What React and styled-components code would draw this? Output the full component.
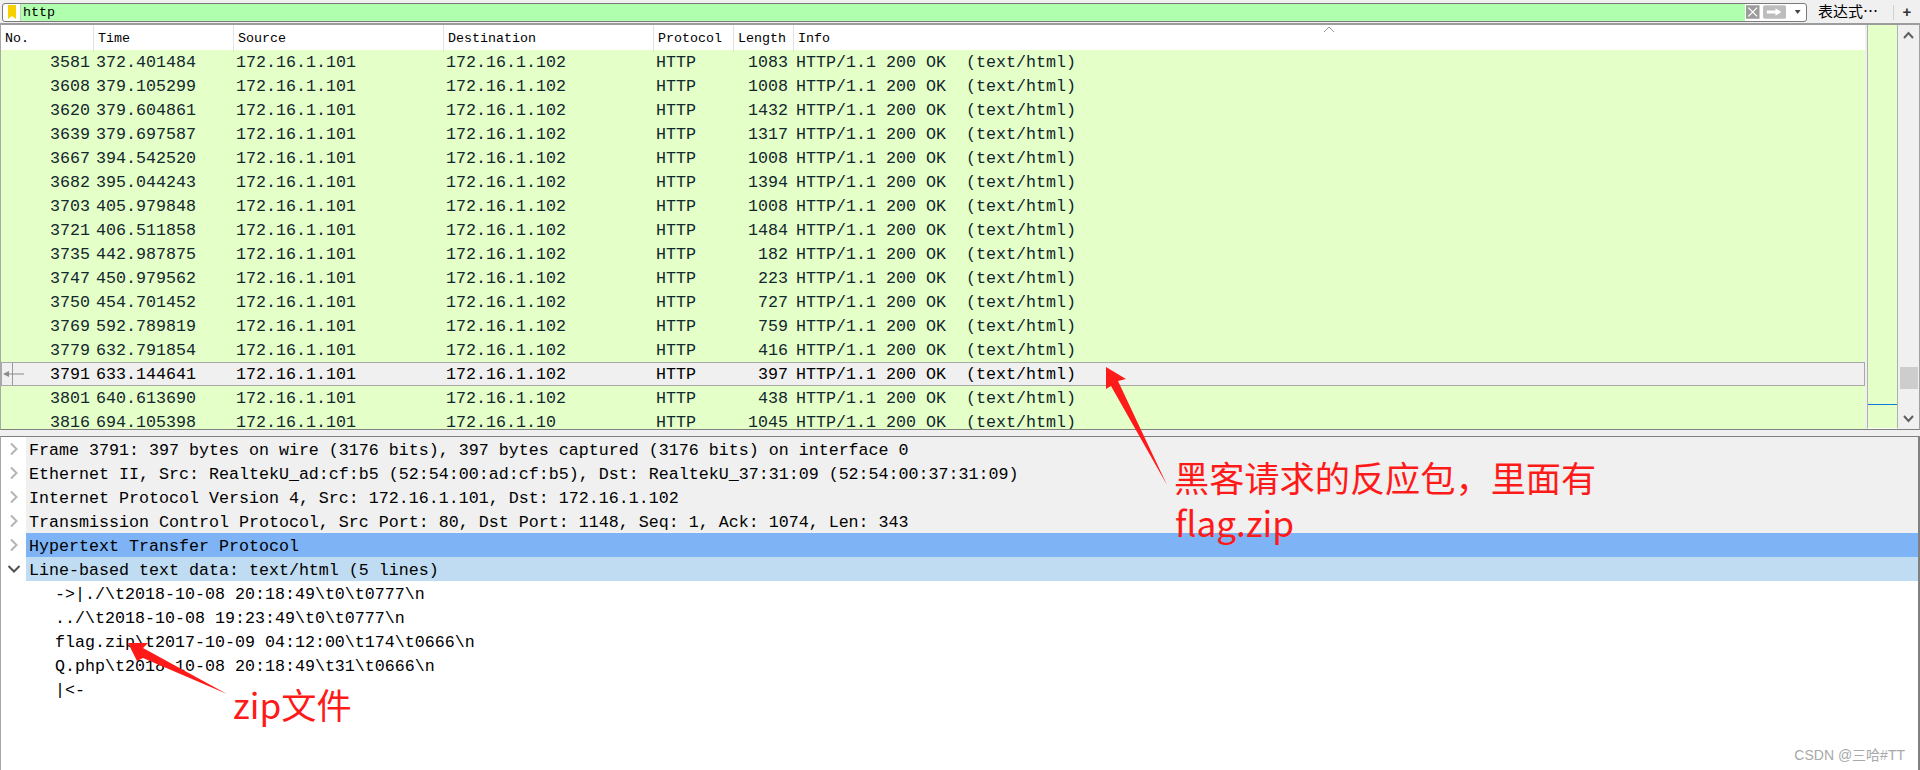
import React from "react";
import styled, { createGlobalStyle } from "styled-components";

const MONO = `"Liberation Mono", "DejaVu Sans Mono", monospace`;
const COLS = "92px 140px 210px 210px 80px 60px 1fr";

const rows = [
  [3581, "372.401484", "172.16.1.102", 1083],
  [3608, "379.105299", "172.16.1.102", 1008],
  [3620, "379.604861", "172.16.1.102", 1432],
  [3639, "379.697587", "172.16.1.102", 1317],
  [3667, "394.542520", "172.16.1.102", 1008],
  [3682, "395.044243", "172.16.1.102", 1394],
  [3703, "405.979848", "172.16.1.102", 1008],
  [3721, "406.511858", "172.16.1.102", 1484],
  [3735, "442.987875", "172.16.1.102", 182],
  [3747, "450.979562", "172.16.1.102", 223],
  [3750, "454.701452", "172.16.1.102", 727],
  [3769, "592.789819", "172.16.1.102", 759],
  [3779, "632.791854", "172.16.1.102", 416],
  [3791, "633.144641", "172.16.1.102", 397],
  [3801, "640.613690", "172.16.1.102", 438],
  [3816, "694.105398", "172.16.1.10", 1045],
];

const tree = [
  { text: "Frame 3791: 397 bytes on wire (3176 bits), 397 bytes captured (3176 bits) on interface 0" },
  { text: "Ethernet II, Src: RealtekU_ad:cf:b5 (52:54:00:ad:cf:b5), Dst: RealtekU_37:31:09 (52:54:00:37:31:09)" },
  { text: "Internet Protocol Version 4, Src: 172.16.1.101, Dst: 172.16.1.102" },
  { text: "Transmission Control Protocol, Src Port: 80, Dst Port: 1148, Seq: 1, Ack: 1074, Len: 343" },
  { text: "Hypertext Transfer Protocol", state: "selected" },
  { text: "Line-based text data: text/html (5 lines)", state: "open" },
];

const lines = [
  "->|./\\t2018-10-08 20:18:49\\t0\\t0777\\n",
  "../\\t2018-10-08 19:23:49\\t0\\t0777\\n",
  "flag.zip\\t2017-10-09 04:12:00\\t174\\t0666\\n",
  "Q.php\\t2018-10-08 20:18:49\\t31\\t0666\\n",
  "|<-",
];

const GlobalStyle = createGlobalStyle`
  html, body { margin: 0; padding: 0; background: #fff; }
  * { box-sizing: border-box; }
`;

const Page = styled.div`
  position: relative;
  width: 1920px;
  height: 770px;
  overflow: hidden;
  background: #f0f0f0;
  font-family: ${MONO};
`;

const Toolbar = styled.div`
  display: flex;
  align-items: center;
  height: 23px;
  padding: 2px 0 1px 2px;
`;

const FilterBox = styled.div`
  display: flex;
  align-items: stretch;
  width: 1805px;
  height: 19px;
  border: 1px solid #7a7a7a;
  border-radius: 3px;
  overflow: hidden;
  background: #fff;
`;

const BookmarkCell = styled.div`
  display: flex;
  align-items: center;
  justify-content: center;
  width: 18px;
  flex: none;
  border-right: 1px solid #c8c8c8;
`;

const FilterInput = styled.div`
  flex: 1;
  padding-left: 2px;
  background: #afffaf;
  color: #000;
  font-size: 13.33px;
  line-height: 17px;
`;

const FilterButtons = styled.div`
  display: flex;
  align-items: center;
  gap: 3px;
  flex: none;
  width: 61px;
  padding-left: 1px;
`;

const ExpressionLabel = styled.div`
  width: 75px;
  margin-left: 11px;
  padding-bottom: 3px;
  color: #000;
  font-family: "Noto Sans CJK SC", sans-serif;
  font-size: 15px;
  line-height: 20px;
  white-space: nowrap;
`;

const ToolbarDivider = styled.div`
  width: 1px;
  height: 15px;
  background: #d0d0d0;
`;

const PlusButton = styled.div`
  flex: 1;
  color: #333;
  font-family: "Liberation Sans", sans-serif;
  font-size: 15px;
  font-weight: 700;
  line-height: 20px;
  text-align: center;
`;

const ListPane = styled.div`
  display: flex;
  height: 407px;
  border-top: 2px solid #9c9c9c;
  border-bottom: 1px solid #808080;
  border-left: 1px solid #a8a8a8;
  border-right: 1px solid #a0a0a0;
`;

const ListBody = styled.div`
  width: 1864px;
  flex: none;
  overflow: hidden;
`;

const HeaderRow = styled.div`
  position: relative;
  display: grid;
  grid-template-columns: ${COLS};
  height: 25px;
  background: #fff;
`;

const HeaderCell = styled.div`
  padding-left: 4px;
  border-left: ${(p) => (p.$first ? "none" : "1px solid #e2e2e2")};
  color: #000;
  font-size: 13.33px;
  line-height: 27px;
`;

const SortMark = styled.svg`
  position: absolute;
  left: 1322px;
  top: 1px;
`;

const PacketRow = styled.div`
  display: grid;
  grid-template-columns: ${COLS};
  height: 24px;
  background: ${(p) => (p.$selected ? "#f0f0f0" : "#e4ffc7")};
  color: ${(p) => (p.$selected ? "#000" : "#12272e")};
  font-size: 16.67px;
  line-height: 26px;
  white-space: pre;
  box-shadow: ${(p) => (p.$selected ? "inset 0 0 0 1px #a8a8a8" : "none")};
`;

const NumberCell = styled.div`
  position: relative;
  padding-right: 3px;
  text-align: right;
`;

const TextCell = styled.div`
  padding-left: 3px;
`;

const LengthCell = styled.div`
  padding-right: 5px;
  text-align: right;
`;

const RelatedMark = styled.svg`
  position: absolute;
  left: 0;
  top: 1px;
`;

const Minimap = styled.div`
  position: relative;
  width: 31px;
  flex: none;
  margin-left: 2px;
  border-left: 1px solid #b0b0b0;
  border-right: 1px solid #b0b0b0;
  border-bottom: 1px solid #fff;
  background: #e4ffc7;
`;

const MinimapMark = styled.div`
  position: absolute;
  left: 0;
  right: 0;
  top: 379px;
  height: 1px;
  background: #0a78dc;
`;

const Scrollbar = styled.div`
  position: relative;
  flex: 1;
  background: #f0f0f0;
`;

const ScrollThumb = styled.div`
  position: absolute;
  left: 2px;
  right: 1px;
  top: 342px;
  height: 22px;
  background: #cdcdcd;
`;

const ScrollArrow = styled.svg`
  position: absolute;
  left: 5px;
  top: ${(p) => p.$top}px;
`;

const DetailPane = styled.div`
  height: 334px;
  margin-top: 6px;
  border-top: 1px solid #808080;
  border-left: 1px solid #a8a8a8;
  border-right: 2px solid #808080;
  background: #fff;
  color: #000;
  font-size: 16.67px;
  line-height: 27px;
  white-space: pre;
`;

const TreeRow = styled.div`
  display: flex;
  height: 24px;
`;

const TreeGutter = styled.div`
  display: flex;
  align-items: center;
  justify-content: center;
  width: 25px;
  flex: none;
`;

const TreeLabel = styled.div`
  flex: 1;
  padding-left: 3px;
  background: ${(p) =>
    p.$state === "selected" ? "#7eb4f5" : p.$state === "open" ? "#c0dcf2" : "#f0f0f0"};
`;

const DataLine = styled.div`
  height: 24px;
  padding-left: 54px;
`;

const Overlay = styled.svg`
  position: absolute;
  left: 0;
  top: 0;
  pointer-events: none;
`;

const Note = styled.div`
  position: absolute;
  left: ${(p) => p.$left}px;
  top: ${(p) => p.$top}px;
  color: #ff1a1a;
  font-family: "Noto Sans CJK SC", sans-serif;
  font-size: 35.2px;
  line-height: 43px;
  white-space: nowrap;
`;

const Watermark = styled.div`
  position: absolute;
  right: 15px;
  bottom: 6px;
  color: #a8a8a8;
  font-family: "Liberation Sans", "Noto Sans CJK SC", sans-serif;
  font-size: 14px;
  line-height: 18px;
`;

const Chevron = ({ open }) => (
  <svg width="14" height="14" viewBox="0 0 14 14" fill="none" stroke={open ? "#505050" : "#b4b4b4"} strokeWidth="2">
    <path d={open ? "M1.500 4l5.500 5.500L12.500 4" : "M4 1.500L9.500 7 4 12.500"} />
  </svg>
);

export default function App() {
  return (
    <Page>
      <GlobalStyle />
      <Toolbar>
        <FilterBox>
          <BookmarkCell>
            <svg width="8" height="14" viewBox="0 0 8 14">
              <path d="M0 0h8v14L4 11 0 14z" fill="#f7d000" />
            </svg>
          </BookmarkCell>
          <FilterInput>http</FilterInput>
          <FilterButtons>
            <svg width="14" height="14" viewBox="0 0 14 14">
              <rect width="14" height="14" fill="#9c9c9c" />
              <path d="M2.500 2.500l9 9M11.500 2.500l-9 9" stroke="#fff" strokeWidth="1.3" />
            </svg>
            <svg width="24" height="14" viewBox="0 0 24 14">
              <rect width="24" height="14" rx="2" fill="#bdbdbd" />
              <path d="M4 5.500h9V3l6 4-6 4V8.500H4z" fill="#fff" />
            </svg>
            <svg width="18" height="14" viewBox="0 0 18 14">
              <path d="M6 5h6l-3 4z" fill="#444" />
            </svg>
          </FilterButtons>
        </FilterBox>
        <ExpressionLabel>表达式…</ExpressionLabel>
        <ToolbarDivider />
        <PlusButton>+</PlusButton>
      </Toolbar>

      <ListPane>
        <ListBody>
          <HeaderRow>
            <HeaderCell $first>No.</HeaderCell>
            <HeaderCell>Time</HeaderCell>
            <HeaderCell>Source</HeaderCell>
            <HeaderCell>Destination</HeaderCell>
            <HeaderCell>Protocol</HeaderCell>
            <HeaderCell>Length</HeaderCell>
            <HeaderCell>Info</HeaderCell>
            <SortMark width="12" height="7" viewBox="0 0 12 7" fill="none" stroke="#9a9a9a">
              <path d="M1 6l5-5 5 5" />
            </SortMark>
          </HeaderRow>
          {rows.map(([no, time, dest, len]) => {
            const selected = no === 3791;
            return (
              <PacketRow key={no} $selected={selected}>
                <NumberCell>
                  {selected && (
                    <RelatedMark width="24" height="22" viewBox="0 0 24 22" fill="none">
                      <path d="M11.500 0v22" stroke="#9a9a9a" />
                      <path d="M7 11h16" stroke="#8a8a8a" />
                      <path d="M2 11l6-3v6z" fill="#8a8a8a" />
                    </RelatedMark>
                  )}
                  {no}
                </NumberCell>
                <TextCell>{time}</TextCell>
                <TextCell>172.16.1.101</TextCell>
                <TextCell>{dest}</TextCell>
                <TextCell>HTTP</TextCell>
                <LengthCell>{len}</LengthCell>
                <TextCell>HTTP/1.1 200 OK  (text/html)</TextCell>
              </PacketRow>
            );
          })}
        </ListBody>
        <Minimap>
          <MinimapMark />
        </Minimap>
        <Scrollbar>
          <ScrollArrow $top={6} width="11" height="8" viewBox="0 0 11 8" fill="none" stroke="#606060" strokeWidth="2">
            <path d="M1 7l4.500-5L10 7" />
          </ScrollArrow>
          <ScrollArrow $top={390} width="11" height="8" viewBox="0 0 11 8" fill="none" stroke="#606060" strokeWidth="2">
            <path d="M1 1l4.500 5L10 1" />
          </ScrollArrow>
          <ScrollThumb />
        </Scrollbar>
      </ListPane>

      <DetailPane>
        {tree.map((item) => (
          <TreeRow key={item.text}>
            <TreeGutter>
              <Chevron open={item.state === "open"} />
            </TreeGutter>
            <TreeLabel $state={item.state}>{item.text}</TreeLabel>
          </TreeRow>
        ))}
        {lines.map((line) => (
          <DataLine key={line}>{line}</DataLine>
        ))}
      </DetailPane>

      <Overlay width="1920" height="770" viewBox="0 0 1920 770">
        <path d="M1106 367L1126 379 1118 381 1167 485 1111 386 1106 389z" fill="#ff1a1a" />
        <path d="M128 643L148 643 143 648 227 694 143 658 137 661z" fill="#ff1a1a" />
      </Overlay>
      <Note $left={1174} $top={455}>黑客请求的反应包，里面有</Note>
      <Note $left={1175} $top={500}>flag.zip</Note>
      <Note $left={233} $top={682}>zip文件</Note>
      <Watermark>CSDN @三哈#TT</Watermark>
    </Page>
  );
}
